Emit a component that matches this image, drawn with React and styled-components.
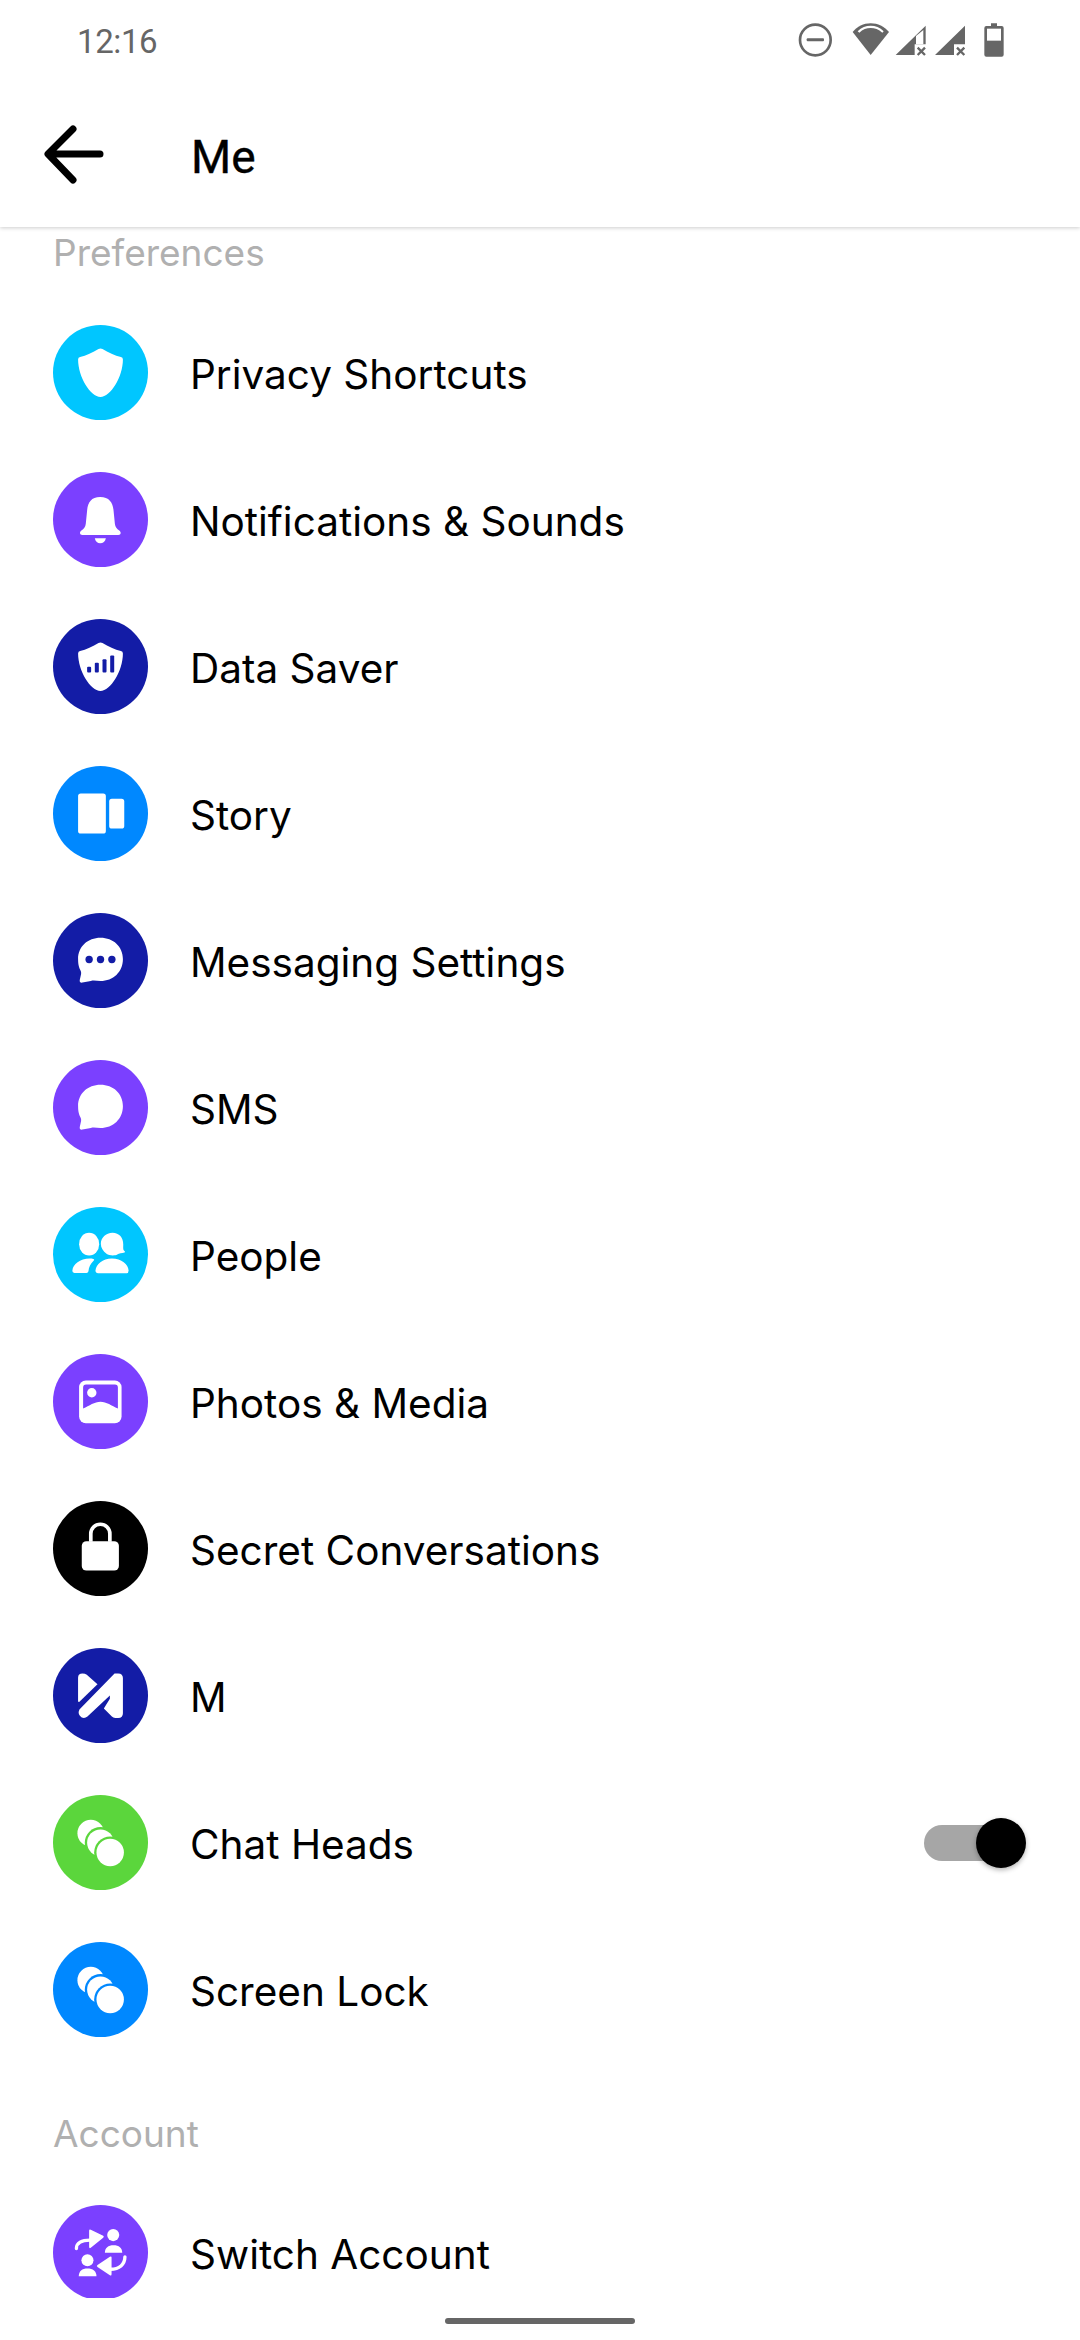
import React from "react";
import styled, { createGlobalStyle } from "styled-components";

const Global = createGlobalStyle`
  html, body { margin: 0; padding: 0; background: #fff; }
  * { box-sizing: border-box; }
`;

const Screen = styled.div`
  width: 1080px;
  height: 2340px;
  display: flex;
  flex-direction: column;
  overflow: hidden;
  background: #fff;
  font-family: Inter, "Liberation Sans", sans-serif;
`;

const TopBar = styled.header`
  position: relative;
  z-index: 2;
  height: 227px;
  flex: none;
  display: flex;
  flex-direction: column;
  background: #fff;
  box-shadow: 0 1px 4px rgba(0, 0, 0, 0.2);
`;

const StatusBar = styled.div`
  height: 80px;
  padding: 10px 60px 10px 77px;
  display: flex;
  align-items: center;
  justify-content: space-between;
`;

const Clock = styled.span`
  font-family: Roboto, sans-serif;
  font-size: 33px;
  letter-spacing: -0.4px;
  color: #666;
  margin-top: 3px;
`;

const StatusIcons = styled.svg`
  width: 240px;
  height: 60px;
`;

const TitleRow = styled.div`
  flex: 1;
  display: flex;
  align-items: center;
  padding: 0 0 0 44px;
`;

const BackIcon = styled.svg`
  width: 62px;
  height: 60px;
  margin-top: 2px;
`;

const Title = styled.h1`
  margin: 7px 0 0 85px;
  font-family: Roboto, sans-serif;
  font-weight: 400;
  font-size: 46px;
  color: #000;
  -webkit-text-stroke: 0.4px #000;
`;

const List = styled.main`
  height: 2071px;
  flex: none;
  overflow: hidden;
`;

const SectionLabel = styled.div`
  height: ${(p) => p.$height}px;
  padding: ${(p) => p.$top}px 0 0 53px;
  font-size: 37px;
  line-height: 42px;
  color: #b0b0b0;
`;

const Row = styled.div`
  height: 147px;
  display: flex;
  align-items: center;
  padding: 0 60px 0 53px;
`;

const Circle = styled.svg`
  width: 95px;
  height: 95px;
  flex: none;
  color: ${(p) => p.$bg};
`;

const Label = styled.span`
  margin: 3px 0 0 42px;
  flex: 1;
  font-size: 40.5px;
  color: #000;
`;

const Toggle = styled.div`
  position: relative;
  width: 96px;
  height: 36px;
  border-radius: 18px;
  background: #a6a6a6;
`;

const Knob = styled.div`
  position: absolute;
  right: -6px;
  top: -7px;
  width: 50px;
  height: 50px;
  border-radius: 50%;
  background: #000;
  box-shadow: 0 2px 5px rgba(0, 0, 0, 0.3);
`;

const NavArea = styled.div`
  flex: 1;
  display: flex;
  justify-content: center;
  padding-top: 20px;
`;

const NavPill = styled.div`
  width: 190px;
  height: 6px;
  border-radius: 3px;
  background: #666;
`;

const SHIELD =
  "M136 72Q142 68 148 72C165 82 185 92 203 96Q209 97 209 103C209 155 172 215 142 215C112 215 75 155 75 103Q75 97 81 96C99 92 119 82 136 72Z";
const BUBBLE =
  "M142 74C180 74 209 100 209 138C209 176 180 203 142 203C131 203 122 201 113 203L88 208C82 209 79 206 80 200L84 182C85 175 82 171 79 165C76 156 75 148 75 138C75 100 104 74 142 74Z";

const Heads = () => (
  <>
    <circle cx="113" cy="114" r="40" fill="#fff" />
    <circle cx="142" cy="143" r="47" fill="currentColor" />
    <circle cx="142" cy="143" r="40" fill="#fff" />
    <circle cx="171" cy="172" r="48" fill="currentColor" />
    <circle cx="171" cy="172" r="41" fill="#fff" />
  </>
);

const glyphs = {
  shield: <path d={SHIELD} fill="#fff" />,
  bell: (
    <g fill="#fff">
      <path d="M141 75C114 75 104 92 102 115L98 155C97 166 92 170 85 175C78 180 80 188 88 188H195C203 188 205 180 198 175C191 170 186 166 185 155L181 115C179 92 168 75 141 75Z" />
      <path d="M125 198H158C156 208 150 213 141 213C133 213 127 208 125 198Z" />
    </g>
  ),
  data: (
    <>
      <path d={SHIELD} fill="#fff" />
      <g fill="currentColor">
        <rect x="102" y="143" width="12" height="17" rx="3" />
        <rect x="125" y="131" width="12" height="29" rx="3" />
        <rect x="148" y="120" width="12" height="40" rx="3" />
        <rect x="171" y="109" width="12" height="51" rx="3" />
      </g>
    </>
  ),
  story: (
    <g fill="#fff">
      <rect x="75" y="82" width="83" height="120" rx="8" />
      <rect x="168" y="98" width="45" height="89" rx="8" />
    </g>
  ),
  messaging: (
    <>
      <path d={BUBBLE} fill="#fff" />
      <g fill="currentColor">
        <circle cx="108" cy="139" r="11" />
        <circle cx="142" cy="139" r="11" />
        <circle cx="176" cy="139" r="11" />
      </g>
    </>
  ),
  bubble: <path d={BUBBLE} fill="#fff" />,
  people: (
    <g fill="#fff">
      <ellipse cx="108" cy="111" rx="30" ry="34" />
      <path d="M58 190C60 170 80 155 110 154C122 154 125 157 122 160C112 170 107 180 106 192Q105 197 100 197H64Q57 197 58 190Z" />
      <path d="M176 154C205 154 225 172 226 190Q226 198 220 198H134Q126 198 127 190C129 172 148 154 176 154Z" />
      <path d="M178 77C198 77 210 92 210 112C210 120 209 126 212 130Q218 134 214 136C205 138 198 138 192 142C186 146 168 146 160 140C150 132 143 122 143 110C143 92 158 77 178 77Z" />
    </g>
  ),
  photos: (
    <>
      <rect x="78" y="79" width="127" height="128" rx="20" fill="#fff" />
      <path
        d="M90 100Q90 91 99 91H185Q194 91 194 100V163C175 155 160 143 142 143C124 143 109 155 90 163Z"
        fill="currentColor"
      />
      <circle cx="116" cy="116" r="14" fill="#fff" />
    </>
  ),
  lock: (
    <>
      <path
        d="M113 122V98A28.500 28.500 0 0 1 170 98V122"
        fill="none"
        stroke="#fff"
        strokeWidth="11"
      />
      <rect x="86" y="120" width="111" height="88" rx="14" fill="#fff" />
    </>
  ),
  m: (
    <g fill="#fff">
      <path d="M75 88Q75 76 88 76Q96 76 101 80L133 108L79 161Q75 163 75 158Z" />
      <path d="M184 76H195Q209 76 209 90V195Q209 209 195 209H186Q180 209 176 205L152 181L170 152V142L103 205Q95 212 86 208Q72 198 79 184Z" />
    </g>
  ),
  heads: <Heads />,
  switch: (
    <g fill="#fff">
      <circle cx="180" cy="90" r="18" />
      <path d="M155 143C155 128 165 120 181 120C197 120 207 128 207 143Z" />
      <circle cx="103" cy="165" r="18" />
      <path d="M77 213C77 198 87 190 103 190C119 190 130 198 130 213Z" />
      <path d="M108 77Q108 72 113 74L150 92Q154 95 150 98L113 128Q108 131 108 125Z" />
      <path d="M70 130C70 114 86 105 110 105" fill="none" stroke="#fff" strokeWidth="10" strokeLinecap="round" />
      <path d="M175 157Q175 152 170 155L133 179Q129 182 133 185L170 210Q175 213 175 207Z" />
      <path d="M215 155C215 178 198 192 172 192" fill="none" stroke="#fff" strokeWidth="10" strokeLinecap="round" />
    </g>
  ),
};

const RowIcon = ({ bg, name }) => (
  <Circle $bg={bg} viewBox="0 0 284 284">
    <circle cx="142" cy="142" r="142" fill="currentColor" />
    {glyphs[name]}
  </Circle>
);

const prefs = [
  ["Privacy Shortcuts", "#00c6ff", "shield"],
  ["Notifications & Sounds", "#7b40ff", "bell"],
  ["Data Saver", "#131ca6", "data"],
  ["Story", "#0088ff", "story"],
  ["Messaging Settings", "#131ca6", "messaging"],
  ["SMS", "#7b40ff", "bubble"],
  ["People", "#00c6ff", "people"],
  ["Photos & Media", "#7b40ff", "photos"],
  ["Secret Conversations", "#000", "lock"],
  ["M", "#131ca6", "m"],
  ["Chat Heads", "#5bd63c", "heads", true],
  ["Screen Lock", "#0088ff", "heads"],
];

const Item = ({ text, bg, icon, toggle }) => (
  <Row>
    <RowIcon bg={bg} name={icon} />
    <Label>{text}</Label>
    {toggle && (
      <Toggle>
        <Knob />
      </Toggle>
    )}
  </Row>
);

export default function App() {
  return (
    <Screen>
      <Global />
      <TopBar>
        <StatusBar>
          <Clock>12:16</Clock>
          <StatusIcons viewBox="0 0 720 180">
            <g fill="#666">
              <circle cx="106" cy="90" r="46" fill="none" stroke="#666" strokeWidth="8" />
              <rect x="80" y="85" width="52" height="9" rx="3" />
              <path d="M272 135L218 66C232 50 250 40 272 40C294 40 312 50 327 66Z" />
              <path d="M238 68C248 58 260 54 272 54C284 54 296 58 307 68L311 64C300 52 286 47 272 47C258 47 244 52 233 64Z" fill="#fff" />
              <path d="M347 135L437 47V103H404V135Z" />
              <path d="M408 78L430 60V103H408Z" fill="#fff" />
              <path d="M465 135L555 47V103H522V135Z" />
              <path d="M413 113L435 135M435 113L413 135M531 113L553 135M553 113L531 135" stroke="#666" strokeWidth="7" fill="none" />
              <path d="M633 40H651V48H665Q671 48 671 54V134Q671 140 665 140H619Q613 140 613 134V54Q613 48 619 48H633Z" />
              <rect x="621" y="56" width="42" height="36" fill="#fff" />
            </g>
          </StatusIcons>
        </StatusBar>
        <TitleRow>
          <BackIcon viewBox="0 0 62 60">
            <path
              d="M56 29H5M29 4L4 29L29 55"
              fill="none"
              stroke="#000"
              strokeWidth="7"
              strokeLinecap="round"
              strokeLinejoin="round"
            />
          </BackIcon>
          <Title>Me</Title>
        </TitleRow>
      </TopBar>
      <List>
        <SectionLabel $height={72} $top={5}>
          Preferences
        </SectionLabel>
        {prefs.map(([text, bg, icon, toggle]) => (
          <Item key={text} text={text} bg={bg} icon={icon} toggle={toggle} />
        ))}
        <SectionLabel $height={116} $top={50}>
          Account
        </SectionLabel>
        <Item text="Switch Account" bg="#7b40ff" icon="switch" />
      </List>
      <NavArea>
        <NavPill />
      </NavArea>
    </Screen>
  );
}
